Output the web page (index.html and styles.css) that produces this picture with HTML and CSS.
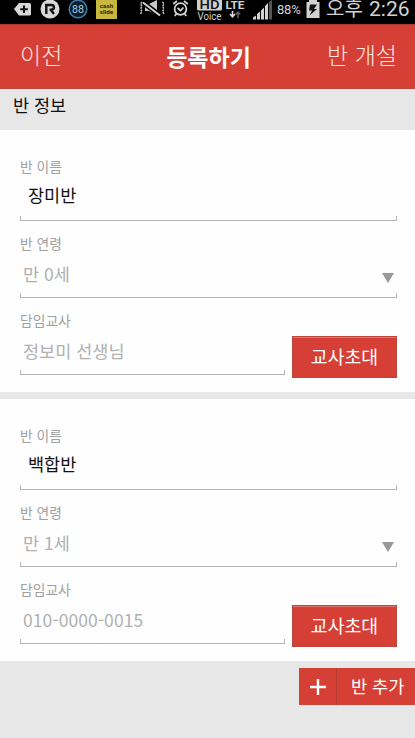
FILE: index.html
```html
<!DOCTYPE html>
<html lang="ko">
<head>
    <meta charset="UTF-8">
    <meta name="viewport" content="width=device-width, initial-scale=1.0">
    <title>등록하기</title>
    <link rel="stylesheet" href="styles.css">
</head>
<body>
    <div class="status-bar">
        <svg class="icon-tag" width="18" height="24" viewBox="0 0 18 24">
            <path d="M0 9 5 3H15.500Q17 3 17 4.500V14Q17 15.500 15.500 15.500H5Z" fill="#d8d8d8"/>
            <path d="M10 5.500V13M6.200 9.200H13.800" stroke="#111" stroke-width="2"/>
        </svg>
        <svg class="icon-r" width="20" height="24" viewBox="0 0 20 24">
            <circle cx="10" cy="9" r="9.500" fill="#d8d8d8"/>
            <path d="M5 5H11.500Q14 5 14 7.300T11.500 9.600H9.500M6.300 4.500V14M10.500 9.600 14 14" fill="none" stroke="#111" stroke-width="2.400"/>
        </svg>
        <svg class="icon-count" width="20" height="24" viewBox="0 0 20 24">
            <circle cx="10" cy="9" r="8.800" fill="#0d1c2b" stroke="#3f7fae" stroke-width="1.500"/>
            <text x="10" y="13" text-anchor="middle" textLength="12" lengthAdjust="spacingAndGlyphs" font-size="11" fill="#a9cfe8">88</text>
        </svg>
        <svg class="icon-cash" width="21" height="24" viewBox="0 0 21 24">
            <rect width="21" height="19" fill="#c9b840"/>
            <text x="10.500" y="8" text-anchor="middle" textLength="13.500" lengthAdjust="spacingAndGlyphs" font-size="6" font-weight="700" fill="#2d290f">cash</text>
            <text x="10.500" y="13.500" text-anchor="middle" textLength="13.500" lengthAdjust="spacingAndGlyphs" font-size="6" font-weight="700" fill="#2d290f">slide</text>
        </svg>
        <svg class="icon-mute" width="28" height="24" viewBox="0 0 28 24">
            <path d="M6 4H10L18 0V15L10 11H6Z" fill="#c8c8c8"/>
            <path d="M4 2.500 21 15.500" stroke="#000" stroke-width="5"/>
            <path d="M4 2.500 21 15.500" stroke="#d2d2d2" stroke-width="2"/>
            <path d="M3 2 1.500 4 3 6.500 1.500 9 3 11.500 1.500 14M23.500 2 25 4 23.500 6.500 25 9 23.500 11.500 25 14" fill="none" stroke="#c8c8c8" stroke-width="1.500" stroke-dasharray="2 1"/>
        </svg>
        <svg class="icon-alarm" width="18" height="24" viewBox="0 0 18 24">
            <circle cx="8.500" cy="9" r="5.900" fill="none" stroke="#d2d2d2" stroke-width="1.800"/>
            <path d="M1.200 4 5 1M12 1 15.800 4M4.500 13.500 2.800 16M12.500 13.500 14.200 16M5.500 8 8.500 10.500 11.500 7.500" fill="none" stroke="#d2d2d2" stroke-width="1.700"/>
        </svg>
        <svg class="icon-hd" width="26" height="24" viewBox="0 0 26 24">
            <rect x="0" y="-3" width="25" height="13.500" rx="1.500" fill="#cfcfcf"/>
            <text x="12.500" y="9" text-anchor="middle" textLength="20" lengthAdjust="spacingAndGlyphs" font-size="13" font-weight="500" fill="#111">HD</text>
            <text x="12.500" y="20" text-anchor="middle" textLength="24" lengthAdjust="spacingAndGlyphs" font-size="10.500" fill="#d2d2d2">Voice</text>
        </svg>
        <svg class="icon-lte" width="20" height="24" viewBox="0 0 20 24">
            <text x="10" y="8.500" text-anchor="middle" textLength="19" lengthAdjust="spacingAndGlyphs" font-size="11.500" font-weight="700" fill="#cfcfcf">LTE</text>
            <path d="M7.500 11V17M5 14 7.500 16.700 10 14" fill="none" stroke="#ddd" stroke-width="1.600"/>
            <path d="M13 18V12M10.800 14.500 13 12 15.200 14.500" fill="none" stroke="#666" stroke-width="1.400"/>
        </svg>
        <svg class="icon-signal" width="20" height="24" viewBox="0 0 20 24">
            <path d="M0 19.500V17.500L3 15.500V19.500ZM4 19.500V14L7 11.500V19.500ZM8 19.500V10.500L11 7.500V19.500ZM12 19.500V6L15 3V19.500Z" fill="#d2d2d2"/>
            <path d="M16 19.500V2L19 0V19.500Z" fill="#555"/>
        </svg>
        <span class="battery-level">88%</span>
        <svg class="icon-battery" width="14" height="24" viewBox="0 0 14 24">
            <path d="M3 0H11V2H13.500V18H.5V2H3Z" fill="#d2d2d2"/>
            <path d="M11 4.500 4 4.500 3 10.500H6L3.500 15.500 11 9H8Z" fill="#111"/>
        </svg>
        <span class="meridiem">오후</span>
        <span class="clock">2:26</span>
    </div>

    <header class="header">
        <a class="header-link">이전</a>
        <h1 class="header-title">등록하기</h1>
        <a class="header-link">반 개설</a>
    </header>

    <h2 class="section-title">반 정보</h2>

    <div class="class-card">
        <div class="field">
            <label class="field-label">반 이름</label>
            <div class="field-box name">장미반</div>
        </div>
        <div class="field">
            <label class="field-label">반 연령</label>
            <div class="field-box">만 0세<span class="arrow"></span></div>
        </div>
        <div class="teacher-row">
            <div class="field">
                <label class="field-label">담임교사</label>
                <div class="field-box">정보미 선생님</div>
            </div>
            <button class="invite">교사초대</button>
        </div>
    </div>

    <div class="class-card">
        <div class="field">
            <label class="field-label">반 이름</label>
            <div class="field-box name">백합반</div>
        </div>
        <div class="field">
            <label class="field-label">반 연령</label>
            <div class="field-box">만 1세<span class="arrow"></span></div>
        </div>
        <div class="teacher-row">
            <div class="field">
                <label class="field-label">담임교사</label>
                <div class="field-box phone">010-0000-0015</div>
            </div>
            <button class="invite">교사초대</button>
        </div>
    </div>

    <div class="footer">
        <button class="add-class">
            <span class="plus">
                <svg width="16" height="16" viewBox="0 0 16 16"><path d="M8 0V16M0 8H16" stroke="#fff" stroke-width="2.400"/></svg>
            </span>
            <span class="add-text">반 추가</span>
        </button>
    </div>
</body>
</html>
```

FILE: styles.css
```css
* {
    box-sizing: border-box;
}
body {
    margin: 0;
    height: 738px;
    overflow: hidden;
    background-color: #e7e7e7;
    font-family: 'Noto Sans CJK KR', sans-serif;
}
.status-bar {
    display: flex;
    height: 24px;
    padding-left: 14px;
    background-color: #000;
    color: #d2d2d2;
    font-family: Roboto, 'Noto Sans CJK KR', sans-serif;
    overflow: hidden;
    white-space: nowrap;
}
.status-bar svg {
    flex: none;
}
.icon-r {
    margin-left: 8px;
}
.icon-count {
    margin-left: 8px;
}
.icon-cash {
    margin-left: 8px;
}
.icon-mute {
    margin-left: 22px;
}
.icon-alarm {
    margin-left: 5px;
}
.icon-hd {
    margin-left: 7px;
}
.icon-lte {
    margin-left: 2px;
}
.icon-signal {
    margin-left: 8px;
}
.battery-level {
    width: 25px;
    margin-left: 4px;
    font-size: 13px;
    line-height: 19px;
    letter-spacing: -0.2px;
}
.icon-battery {
    margin-left: 4px;
}
.meridiem {
    width: 43px;
    margin-left: 6px;
    font-size: 20px;
    line-height: 18px;
}
.clock {
    font-size: 21px;
    line-height: 18px;
}
.header {
    display: flex;
    justify-content: space-between;
    align-items: center;
    height: 65px;
    padding: 0 18px 0 20px;
    background-color: #d63f35;
    border-top: 1px solid #a93830;
    border-bottom: 1px solid #bd4a40;
    color: #fff;
}
.header-link {
    width: 90px;
    font-size: 23px;
    font-weight: 300;
    line-height: 30px;
    margin-top: -5px;
    color: #fde4e1;
}
.header-link:last-child {
    text-align: right;
}
.header-title {
    margin: -2px 0 0;
    font-size: 23px;
    font-weight: 700;
    line-height: 30px;
}
.section-title {
    height: 41px;
    margin: 0;
    padding-left: 13px;
    font-size: 17.5px;
    font-weight: 400;
    line-height: 32px;
    color: #111;
}
.class-card {
    height: 262px;
    margin-bottom: 7px;
    padding: 14px 18px 0 20px;
    background-color: #fefefe;
}
.field {
    height: 77px;
    padding-top: 12px;
}
.field-label {
    display: block;
    font-size: 13.8px;
    font-weight: 400;
    line-height: 20px;
    color: #a0a0a0;
}
.field-box {
    display: flex;
    justify-content: space-between;
    height: 45px;
    padding: 0 3px 0 3px;
    font-size: 17.5px;
    font-weight: 400;
    line-height: 42px;
    color: #b0b0b0;
    /* only the last few pixels of the sides are drawn */
    background: linear-gradient(#b5b5b5, #b5b5b5) left bottom / 1px 5px no-repeat,
        linear-gradient(#b5b5b5, #b5b5b5) right bottom / 1px 5px no-repeat,
        linear-gradient(#b5b5b5, #b5b5b5) left bottom / 100% 1px no-repeat;
}
.name {
    padding-left: 8px;
    font-weight: 400;
    line-height: 38px;
    color: #111;
}
.phone {
    letter-spacing: 0.1px;
}
.arrow {
    margin-top: 20px;
    width: 0;
    height: 0;
    border-left: 6px solid transparent;
    border-right: 6px solid transparent;
    border-top: 10px solid #999;
}
.teacher-row {
    display: flex;
    gap: 7px;
}
.teacher-row .field {
    flex: 1;
}
.invite {
    width: 105px;
    height: 42px;
    margin-top: 38px;
    padding: 0 0 2px;
    border: 1px solid #b9473e;
    background-color: #d63f35;
    box-shadow: inset 0 1px #df766e;
    color: #fff;
    font-family: inherit;
    font-size: 18.3px;
    font-weight: 400;
    line-height: 38px;
}
.footer {
    display: flex;
    justify-content: flex-end;
}
.add-class {
    display: flex;
    width: 116px;
    height: 37px;
    padding: 0;
    border: 0;
    background-color: #d63f35;
    color: #fff;
    font-family: inherit;
    font-size: 17.6px;
    line-height: 35px;
}
.plus {
    display: flex;
    justify-content: center;
    align-items: center;
    width: 38px;
    height: 37px;
    border-right: 1px solid #b53c33;
}
.add-text {
    padding-left: 14px;
}
```
